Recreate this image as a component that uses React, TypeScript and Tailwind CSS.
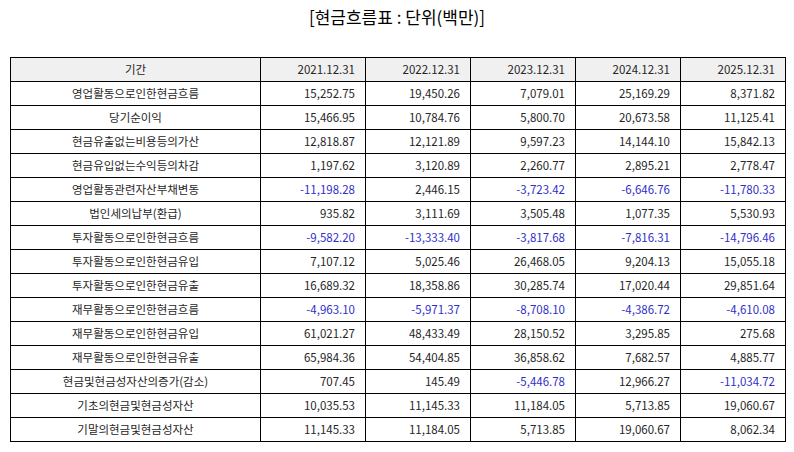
import React from "react";

const headers = ["2021.12.31", "2022.12.31", "2023.12.31", "2024.12.31", "2025.12.31"];
const rows: [string, string[]][] = [
  ["영업활동으로인한현금흐름", ["15,252.75", "19,450.26", "7,079.01", "25,169.29", "8,371.82"]],
  ["당기순이익", ["15,466.95", "10,784.76", "5,800.70", "20,673.58", "11,125.41"]],
  ["현금유출없는비용등의가산", ["12,818.87", "12,121.89", "9,597.23", "14,144.10", "15,842.13"]],
  ["현금유입없는수익등의차감", ["1,197.62", "3,120.89", "2,260.77", "2,895.21", "2,778.47"]],
  ["영업활동관련자산부채변동", ["-11,198.28", "2,446.15", "-3,723.42", "-6,646.76", "-11,780.33"]],
  ["법인세의납부(환급)", ["935.82", "3,111.69", "3,505.48", "1,077.35", "5,530.93"]],
  ["투자활동으로인한현금흐름", ["-9,582.20", "-13,333.40", "-3,817.68", "-7,816.31", "-14,796.46"]],
  ["투자활동으로인한현금유입", ["7,107.12", "5,025.46", "26,468.05", "9,204.13", "15,055.18"]],
  ["투자활동으로인한현금유출", ["16,689.32", "18,358.86", "30,285.74", "17,020.44", "29,851.64"]],
  ["재무활동으로인한현금흐름", ["-4,963.10", "-5,971.37", "-8,708.10", "-4,386.72", "-4,610.08"]],
  ["재무활동으로인한현금유입", ["61,021.27", "48,433.49", "28,150.52", "3,295.85", "275.68"]],
  ["재무활동으로인한현금유출", ["65,984.36", "54,404.85", "36,858.62", "7,682.57", "4,885.77"]],
  ["현금및현금성자산의증가(감소)", ["707.45", "145.49", "-5,446.78", "12,966.27", "-11,034.72"]],
  ["기초의현금및현금성자산", ["10,035.53", "11,145.33", "11,184.05", "5,713.85", "19,060.67"]],
  ["기말의현금및현금성자산", ["11,145.33", "11,184.05", "5,713.85", "19,060.67", "8,062.34"]],
];

export default function App() {
  return (
    <div
      className="w-[794px] h-[452px] bg-white text-[#262626] overflow-hidden"
      style={{ fontFamily: '"Noto Sans CJK KR", "Noto Sans", sans-serif' }}
    >
      <div className="h-[34px] pt-[4px] text-center text-[17px] leading-[26px] text-black">
        [현금흐름표 : 단위(백만)]
      </div>
      <div className="pl-[10px] pt-[23px]">
        <table className="border-collapse text-[11.5px] leading-none">
          <colgroup>
            <col className="w-[250px]" />
            <col className="w-[105px]" />
            <col className="w-[105px]" />
            <col className="w-[105px]" />
            <col className="w-[105px]" />
            <col className="w-[105px]" />
          </colgroup>
          <thead>
            <tr className="h-[24px] bg-[#f0f0f0]">
              <th className="border border-black font-normal text-center p-0">기간</th>
              {headers.map((h) => (
                <th key={h} className="border border-black font-normal text-right pr-[10px] p-0">
                  {h}
                </th>
              ))}
            </tr>
          </thead>
          <tbody>
            {rows.map(([label, vals]) => (
              <tr key={label} className="h-[24px]">
                <td className="border border-black text-center p-0">{label}</td>
                {vals.map((v, i) => (
                  <td
                    key={i}
                    className={
                      v.startsWith("-")
                        ? "border border-black text-right pr-[10px] p-0 text-[#2f2fc8]"
                        : "border border-black text-right pr-[10px] p-0"
                    }
                  >
                    {v}
                  </td>
                ))}
              </tr>
            ))}
          </tbody>
        </table>
      </div>
    </div>
  );
}
